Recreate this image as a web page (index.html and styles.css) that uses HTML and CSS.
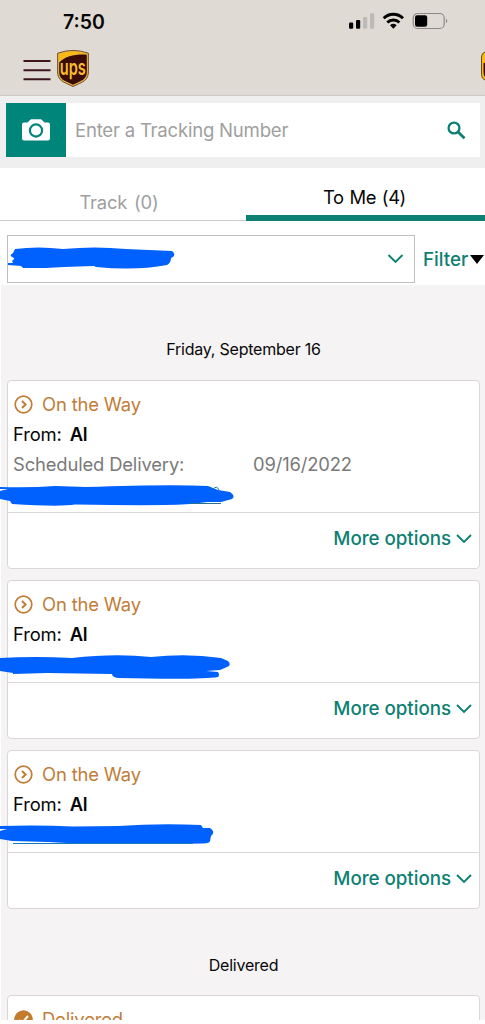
FILE: index.html
```
<!DOCTYPE html>
<html lang="en">
<head>
<meta charset="utf-8">
<meta name="viewport" content="width=device-width, initial-scale=1">
<title>UPS Tracking</title>
<link rel="stylesheet" href="styles.css">
</head>
<body>
<svg class="defs" width="0" height="0" aria-hidden="true">
  <symbol id="way" viewBox="0 0 19 19"><circle cx="9.5" cy="9.5" r="8.3" fill="none" stroke="currentColor" stroke-width="1.7"/><path d="M8 6l3.6 3.500L8 13" fill="none" stroke="currentColor" stroke-width="2"/></symbol>
  <symbol id="chev" viewBox="0 0 16 10"><path d="M1 1l7 7 7-7" fill="none" stroke="currentColor" stroke-width="1.9"/></symbol>
</svg>
<div class="screen">
  <header class="top">
    <div class="status">
      <span class="time">7:50</span>
      <svg class="indicators" width="100" height="18" viewBox="0 0 100 18">
        <rect x="1" y="10.500" width="4.200" height="6.300" rx="1.2"/><rect x="8" y="8" width="4.200" height="8.800" rx="1.2"/>
        <g fill="#bdb9b5"><rect x="15" y="5" width="4.200" height="11.800" rx="1.2"/><rect x="22" y="1.300" width="4.200" height="15.500" rx="1.2"/></g>
        <g fill="none" stroke="#000" stroke-width="2.900"><path d="M35.7 6.300a13.600 13.600 0 0 1 19.300 0"/><path d="M39.300 10.500a8.600 8.600 0 0 1 12.100 0"/></g>
        <path d="M45.350 16.700l-3.300-3.400a5 5 0 0 1 6.600 0z"/>
        <rect x="65.200" y="1.500" width="31" height="15" rx="4.500" fill="none" stroke="#8d8985" stroke-width="1.200"/><rect x="67" y="3.300" width="12.200" height="11.400" rx="2.200"/><path d="M98 6.500q2.500 2.400 0 4.800z" fill="#8d8985"/>
      </svg>
    </div>
    <div class="brand">
      <svg width="28" height="22" viewBox="0 0 28 22" stroke="#3d171c" stroke-width="2.1"><path d="M.5 2h27M.5 11.200h27M.5 20.200h27"/></svg>
      <svg class="logo" width="32" height="37" viewBox="0 0 32 37">
        <path d="M.6 3.200Q16-2.300 31.400 3.200V22c0 7-4.500 9.500-9 11.500L16 36.500l-6.400-3C5 31.500.6 29 .6 22z" fill="#e5b54c" stroke="#6b4218" stroke-width=".9"/>
        <path d="M2.200 12.500C9 5.300 20 3.900 29.800 4.700V22c0 6-3.800 8.200-8 10.100L16 34.800l-5.800-2.700C6 30.200 2.200 28 2.200 22z" fill="#3a0c08"/>
        <path d="M2 4.200Q16-.5 30 4.200C17 3.500 8 6 2 11.500z" fill="#fbb914"/>
        <text x="2.800" y="24.500" textLength="26" lengthAdjust="spacingAndGlyphs" font-size="21.500" font-weight="600" fill="#f9bd2c">ups</text>
      </svg>
      <svg class="edge" width="4" height="32" viewBox="0 0 4 32"><path d="M4 1Q.5 2 .5 6v17q0 5 3.500 6" fill="#f5bd1c" stroke="#6b4a16"/><path d="M2.500 12H4v14q-1.500-2-1.500-5z" fill="#3a0c08"/></svg>
    </div>
  </header>

  <section class="search">
    <button class="camera" aria-label="Scan">
      <svg width="30" height="24" viewBox="0 0 30 24"><path d="M3 4.500h3.500L9 2q.6-.7 1.500-.7h9q.9 0 1.500.7l2.500 2.500H27q2 0 2 2v14q0 2-2 2H3q-2 0-2-2v-14q0-2 2-2z" fill="#fff"/><circle cx="15" cy="12.500" r="6.100" fill="none" stroke="#00857a" stroke-width="2.200"/></svg>
    </button>
    <div class="field"><span class="placeholder">Enter a Tracking Number</span>
      <svg width="19" height="19" viewBox="0 0 19 19" fill="none" stroke="#0b8073"><circle cx="7" cy="7" r="5.400" stroke-width="2.300"/><path d="M10.800 10.800L17.500 17.200" stroke-width="2.800"/></svg>
    </div>
  </section>

  <nav class="tabs">
    <div class="tab"><span class="track">Track (0)</span></div>
    <div class="tab active"><span class="tome">To Me (4)</span></div>
  </nav>

  <section class="filters">
    <div class="select"><svg class="chev" width="17" height="10"><use href="#chev"/></svg>
      <svg class="mark" width="182" height="48" viewBox="0 235 182 48"><path d="M15 249Q38 246 63 249Q95 246 126 249L172 251Q176 254 173 257L171 258Q171 263 167 265Q136 271 96 267L94 266Q60 267 46 268L23 268L21 266L8 265V263H13L12 261Q14 260 14 258Q8 256 13 253Z"/></svg>
    </div>
    <div class="filter"><span>Filter</span><svg width="14" height="9"><path d="M0 0h14L7 9z"/></svg></div>
  </section>

  <main class="list">
    <h2><span class="date">Friday, September 16</span></h2>
    <article class="card">
      <div class="details">
        <div class="row state"><svg width="19" height="19"><use href="#way"/></svg><span class="onway">On the Way</span></div>
        <div class="row"><span class="from">From:</span><b>Al</b></div>
        <div class="row muted"><span class="label">Scheduled Delivery:</span><span class="value">09/16/2022</span></div>
        <div class="row number">
          <svg class="mark" width="240" height="32" viewBox="0 480 240 32"><path d="M0 487Q30 488 55 486L86 487Q170 484 208 486L218 490L230 492Q236 496 232 499L221 502H208L190 504Q165 506 75 504.500Q60 507 12 504L10 501L0 499V491L8 489H0Z"/><path d="M190 503.500h31" stroke="#28718c"/><path d="M213 489q4-4 6 1" fill="none" stroke="#267b88"/></svg>
        </div>
      </div>
      <footer><span class="more">More options</span><svg width="16" height="10"><use href="#chev"/></svg></footer>
    </article>
    <article class="card">
      <div class="details">
        <div class="row state"><svg width="19" height="19"><use href="#way"/></svg><span class="onway">On the Way</span></div>
        <div class="row"><span class="from">From:</span><b>Al</b></div>
        <div class="row number">
          <svg class="mark" width="240" height="32" viewBox="0 650 240 32"><path d="M0 658Q35 656 72 658Q115 653 151 657Q187 653 221 658L228 661Q232 665 227 667L220 670L206 671L218 672Q220 675 218 677Q200 680 118 678Q112 677 112 674L47 673L13 674V673L0 671Z"/></svg>
        </div>
      </div>
      <footer><span class="more">More options</span><svg width="16" height="10"><use href="#chev"/></svg></footer>
    </article>
    <article class="card third">
      <div class="details">
        <div class="row state"><svg width="19" height="19"><use href="#way"/></svg><span class="onway">On the Way</span></div>
        <div class="row"><span class="from">From:</span><b>Al</b></div>
        <div class="row number">
          <svg class="mark" width="240" height="32" viewBox="0 820 240 32"><path d="M0 826Q40 825 73 826.500L118 826Q160 823 201 825L203 828L210 828Q216 832 211 836L210 841Q210 843 203 843.500Q100 845 48 842L12 841L0 839V831L7 829H0Z"/><path d="M13 843.500h180" stroke="#177cbc"/></svg>
        </div>
      </div>
      <footer><span class="more">More options</span><svg width="16" height="10"><use href="#chev"/></svg></footer>
    </article>
    <h2 class="second"><span class="deliv">Delivered</span></h2>
    <article class="card last">
      <div class="details">
        <div class="row state"><svg width="19" height="19" viewBox="0 0 19 19"><circle cx="9.500" cy="9.500" r="9.300" fill="#c57b2c"/><path d="M5 10l3 3 6-7" fill="none" stroke="#fff" stroke-width="2"/></svg><span class="delivered">Delivered</span></div>
      </div>
    </article>
  </main>
</div>
</body>
</html>
```

FILE: styles.css
```
* { box-sizing: border-box; }
body { margin: 0; background: #fff; font-family: Inter, "Liberation Sans", sans-serif; color: #080808; }
svg { display: block; flex: none; }
span { white-space: nowrap; }
.defs { position: absolute; }
.screen { width: 485px; height: 1024px; overflow: hidden; display: flex; flex-direction: column; }
.top { height: 96px; background: #dfdad4; border-bottom: 1px solid #cfc9c6; flex: none; }
.status { height: 44px; padding: 0 37px 0 63px; display: flex; justify-content: space-between; align-items: center; }
.time { font-size: 19.5px; font-weight: 600; letter-spacing: 0; }
.indicators { margin-top: -2px; }
.brand { height: 50px; display: flex; align-items: center; padding: 1px 0 0 22.500px; }
.logo { margin: -2px 0 0 6px; overflow: visible; }
.edge { margin-left: auto; margin-top: -6px; }
.search { height: 72px; background: #efefef; padding: 7px 5px 11px 6px; display: flex; flex: none; }
.camera { border: 0; padding: 0; width: 60px; background: #00857a; display: flex; align-items: center; justify-content: center; }
.field { flex: 1; background: #fff; display: flex; align-items: center; justify-content: space-between; padding: 0 14px 0 9px; }
.placeholder { font-size: 18.6px; color: #a0a0a0; letter-spacing: -.24px; }
.tabs { height: 54px; display: flex; flex: none; }
.tab { width: 246px; height: 53px; border-bottom: 1px solid #cfc9c9; display: flex; justify-content: center; align-items: center; padding: 16px 8px 0 0; font-size: 18.4px; color: #a0a0a0; word-spacing: 2px; letter-spacing: -.2px; }
.tab.active { width: 239px; border-bottom: 6px solid #0d8073; color: #080808; padding: 11px 2px 0 0; word-spacing: 1px; letter-spacing: -.4px; }
.filters { height: 63px; padding: 13px 0 2px 7px; display: flex; flex: none; }
.select { width: 408px; height: 48px; border: 1px solid #bfbfbf; display: flex; justify-content: flex-end; align-items: center; padding-right: 10px; color: #0d8073; position: relative; }
.mark { position: absolute; left: -8px; top: -1px; fill: #0061fe; }
.filter { flex: 1; display: flex; align-items: center; padding-left: 8px; color: #0d8073; font-size: 18.8px; font-weight: 550; gap: 2px; }
.filter svg { fill: #000; }
.list { height: 735px; background: linear-gradient(90deg, #fff 1px, #f5f3f4 1px); padding: 49px 5px 0 7px; overflow: hidden; flex: none; }
h2 { margin: 0; height: 46px; padding-top: 4px; font-size: 16px; line-height: 22px; font-weight: 400; text-align: center; letter-spacing: -.22px; }
.card { background: #fff; border: 1px solid #d9d7d8; border-radius: 4px; margin-bottom: 11px; }
.details { padding-top: 8px; }
.row { height: 30px; display: flex; align-items: center; padding-left: 5px; font-size: 18.4px; letter-spacing: -.15px; }
.state { color: #c17d38; gap: 9px; padding-left: 6px; }
.row b { font-weight: 600; margin-left: 8px; }
.muted { color: #7a7a7a; }
.label { width: 240px; }
.number { height: 33px; position: relative; }
.number .mark { left: -8px; top: 1px; }
footer { height: 56px; border-top: 1px solid #d9d7d8; display: flex; justify-content: flex-end; align-items: center; gap: 5px; padding: 0 7px 4px 0; color: #0d8073; font-size: 18.8px; font-weight: 550; letter-spacing: -.05px; }
.third { margin-bottom: 0; }
.second { height: 86px; padding-top: 45px; }
.last { height: 100px; }
```
